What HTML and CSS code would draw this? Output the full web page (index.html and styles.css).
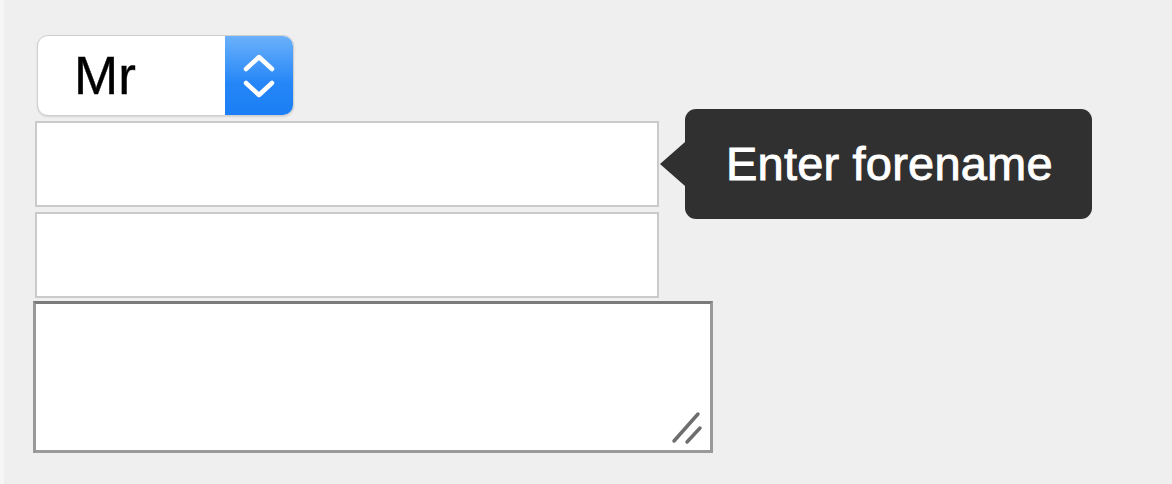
FILE: index.html
```html
<!DOCTYPE html>
<html>
<head>
<meta charset="utf-8">
<link rel="stylesheet" href="styles.css">
</head>
<body>
<div class="page">
  <form class="form">
    <div class="select">
      <span class="select-value">Mr</span>
      <span class="select-arrows">
        <svg width="68" height="80" viewBox="0 0 68 80">
          <polyline points="21,33 34,21 47,33" fill="none" stroke="#fff" stroke-width="4.5" stroke-linecap="round" stroke-linejoin="round"/>
          <polyline points="21,47 34,59 47,47" fill="none" stroke="#fff" stroke-width="4.5" stroke-linecap="round" stroke-linejoin="round"/>
        </svg>
      </span>
    </div>
    <div class="field"></div>
    <div class="field"></div>
    <div class="textarea">
      <svg class="grip" width="40" height="40" viewBox="0 0 40 40">
        <line x1="6" y1="32" x2="30" y2="5" stroke="#6e6e6e" stroke-width="3.5" stroke-linecap="round"/>
        <line x1="19" y1="33" x2="32" y2="19" stroke="#6e6e6e" stroke-width="3.5" stroke-linecap="round"/>
      </svg>
    </div>
    <div class="tooltip">Enter forename</div>
  </form>
</div>
</body>
</html>
```
FILE: styles.css
```css
html, body {
  margin: 0;
  padding: 0;
  background: #efefef;
}
.page {
  width: 1172px;
  height: 484px;
  box-sizing: border-box;
  padding: 35px 0 0 33px;
  border-left: 4px solid #f6f6f6;
  font-family: "Liberation Sans", Arial, sans-serif;
}
.form {
  position: relative;
  display: flex;
  flex-direction: column;
  align-items: flex-start;
  margin-left: -4px;
}
.select {
  display: flex;
  margin-left: 4px;
  width: 257px;
  height: 81px;
  box-sizing: border-box;
  border: 1px solid #cfcfcf;
  border-radius: 11px;
  background: #fff;
  overflow: hidden;
  box-shadow: 0 1px 2px rgba(0,0,0,0.12);
}
.select-value {
  flex: 1;
  font-size: 53px;
  line-height: 80px;
  padding-left: 36px;
  color: #000;
  -webkit-text-stroke: 0.4px #000;
}
.select-arrows {
  width: 68px;
  display: flex;
  align-items: center;
  justify-content: center;
  background: linear-gradient(#6bb1fb, #2586f7 60%, #1b7ef5);
}
.field {
  margin-top: 5px;
  margin-left: 2px;
  width: 624px;
  height: 86px;
  box-sizing: border-box;
  border: 2px solid #cacaca;
  background: #fff;
}
.textarea {
  position: relative;
  margin-top: 3px;
  width: 680px;
  height: 152px;
  box-sizing: border-box;
  border: 3px solid #999;
  border-top-color: #7b7b7b;
  background: #fff;
}
.grip {
  position: absolute;
  right: 2px;
  bottom: 1px;
}
.tooltip {
  position: absolute;
  left: 652px;
  top: 74px;
  width: 407px;
  height: 110px;
  box-sizing: border-box;
  background: #303030;
  border-radius: 11px;
  color: #fff;
  font-size: 47px;
  line-height: 110px;
  padding-left: 41px;
  letter-spacing: 0.2px;
  -webkit-text-stroke: 0.9px #fff;
}
.tooltip::before {
  content: "";
  position: absolute;
  left: -25px;
  top: 33px;
  border-style: solid;
  border-width: 22px 25px 22px 0;
  border-color: transparent #303030 transparent transparent;
}
```
